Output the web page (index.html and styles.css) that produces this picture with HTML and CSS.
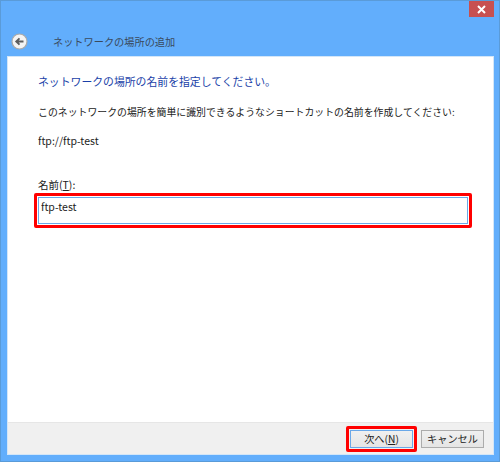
FILE: index.html
```html
<!DOCTYPE html>
<html lang="ja">
<head>
    <meta charset="UTF-8">
    <title>ネットワークの場所の追加</title>
    <link rel="stylesheet" href="styles.css">
</head>
<body>
    <div class="window">
        <div class="titlebar">
            <div class="close-btn">
                <svg width="9" height="9" viewBox="0 0 9 9"><path d="M1 1L8 8M8 1L1 8" stroke="#fff" stroke-width="2"/></svg>
            </div>
        </div>
        <div class="nav">
            <svg class="back-icon" width="17" height="17" viewBox="0 0 17 17">
                <circle cx="8.5" cy="8.5" r="7.5" fill="#f4f4f4" stroke="#a9a9a9" stroke-width="1.2"/>
                <path d="M12.5 8.5H5.5M8.5 5.3L5.2 8.5L8.5 11.7" fill="none" stroke="#5c5c5c" stroke-width="1.8"/>
            </svg>
            <span class="nav-title">ネットワークの場所の追加</span>
        </div>
        <div class="client">
            <div class="content">
                <h1 class="heading">ネットワークの場所の名前を指定してください。</h1>
                <p class="description">このネットワークの場所を簡単に識別できるようなショートカットの名前を作成してください:</p>
                <p class="url">ftp://ftp-test</p>
                <label class="name-label">名前(<u>T</u>):</label>
                <div class="highlight input-highlight">
                    <input class="name-input" type="text" value="ftp-test">
                </div>
            </div>
            <div class="footer">
                <div class="highlight btn-highlight">
                    <button class="btn btn-default">次へ(<u>N</u>)</button>
                </div>
                <button class="btn">キャンセル</button>
            </div>
        </div>
    </div>
</body>
</html>
```

FILE: styles.css
```css
* {
    box-sizing: border-box;
}
html, body {
    margin: 0;
    height: 100%;
}
body {
    font-family: "Noto Sans CJK JP", "Noto Sans", sans-serif;
    color: #222;
    background: #fff;
}
.window {
    display: flex;
    flex-direction: column;
    height: 462px;
    width: 500px;
    background: #62aefc;
    border: 1px solid #5a9bd8;
    padding: 0 5px 6px 6px;
}
.titlebar {
    display: flex;
    justify-content: flex-end;
    height: 25px;
}
.close-btn {
    display: flex;
    align-items: center;
    justify-content: center;
    width: 25px;
    height: 16px;
    background: #c75050;
}
.nav {
    display: flex;
    align-items: center;
    height: 30px;
    padding-left: 4px;
}
.back-icon {
    margin-right: 25px;
}
.nav-title {
    font-size: 10.2px;
    color: #3a4a5c;
}
.client {
    flex: 1;
    display: flex;
    flex-direction: column;
    background: #fff;
    border: 1px solid #d3e6f8;
}
.content {
    flex: 1;
    padding: 16px 21px 0 30px;
}
.heading {
    margin: 0;
    font-size: 10.85px;
    line-height: 16px;
    font-weight: normal;
    color: #1a3fa8;
}
.description {
    margin: 16px 0 0;
    font-size: 9.9px;
    line-height: 14px;
    white-space: nowrap;
}
.url {
    margin: 15px 0 0;
    font-size: 10.5px;
    line-height: 14px;
}
.name-label {
    display: block;
    margin-top: 30px;
    font-size: 10.5px;
    line-height: 14px;
}
.highlight {
    border: 3px solid #f00;
    border-radius: 2px;
    padding: 1px;
}
.input-highlight {
    width: 438px;
    margin: 1px 0 0 -4px;
    height: 35px;
}
.name-input {
    display: block;
    width: 100%;
    height: 100%;
    border: 1px solid #6aa8e8;
    outline: none;
    padding: 0 2px 9px;
    font-family: inherit;
    font-size: 10.5px;
    color: #222;
}
.footer {
    display: flex;
    align-items: center;
    justify-content: flex-end;
    gap: 4px;
    height: 32px;
    padding-right: 9px;
    background: #f0f0f0;
    border-top: 1px solid #e6e6e6;
}
.btn-highlight {
    height: 26px;
    width: 71px;
}
.btn {
    width: 63px;
    height: 18px;
    padding: 0;
    border: 1px solid #acacac;
    background: linear-gradient(#f0f0f0, #e5e5e5);
    font-family: inherit;
    font-size: 10.2px;
    line-height: 15px;
    color: #222;
}
.btn-default {
    display: block;
    width: 100%;
    height: 100%;
    border-color: #6aa8e8;
}
```
